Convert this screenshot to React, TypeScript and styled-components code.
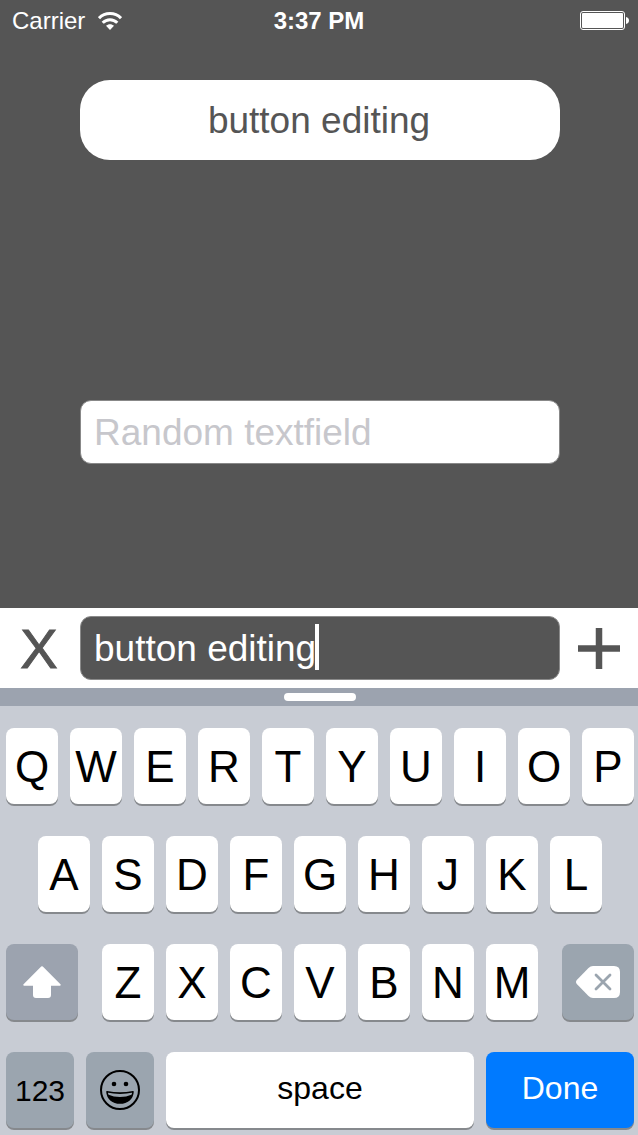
import React from "react";
import styled, { createGlobalStyle } from "styled-components";

const GlobalStyle = createGlobalStyle`
  *, *::before, *::after { box-sizing: border-box; }
  body { margin: 0; background: #555; font-family: "Liberation Sans", Arial, sans-serif; }
  button, input { font-family: inherit; margin: 0; border: 0; padding: 0; }
  svg { display: block; }
`;

const Screen = styled.div`
  display: flex;
  flex-direction: column;
  min-height: 100vh;
  background: #555;
`;

const StatusBar = styled.header`
  display: grid;
  grid-template-columns: 1fr auto 1fr;
  align-items: center;
  height: 40px;
  padding: 0 9px 0 12px;
  color: #fff;
  font-size: 24px;
  line-height: 40px;
`;

const Carrier = styled.div`
  display: flex;
  align-items: center;
  gap: 13px;
  padding-top: 1px;
`;

const Clock = styled.time`
  padding: 1px 3px 0 0;
  font-weight: 700;
`;

const BatterySlot = styled.div`
  display: flex;
  justify-content: flex-end;
`;

const Content = styled.main`
  display: flex;
  flex: 1;
  flex-direction: column;
  gap: 240px;
  padding: 40px 78px 144px 80px;
`;

const PillButton = styled.button`
  height: 80px;
  padding: 2px 2px 0 0;
  border-radius: 30px;
  background: #fff;
  color: #555;
  font-size: 37px;
  line-height: 78px;
`;

const TextField = styled.input<{ $dark?: boolean }>`
  display: block;
  width: 100%;
  height: 64px;
  padding: 2px 13px 0;
  border: 1px solid ${(p) => (p.$dark ? "#8a8a8a" : "#888")};
  border-radius: 11px;
  background: ${(p) => (p.$dark ? "#555" : "#fff")};
  color: ${(p) => (p.$dark ? "#fff" : "#555")};
  font-size: 37px;
  outline: none;
  &::placeholder { color: #c7c7cc; opacity: 1; }
`;

const AccessoryBar = styled.div`
  display: grid;
  grid-template-columns: 80px 1fr 78px;
  align-items: center;
  height: 80px;
  background: #fff;
`;

const BarButton = styled.button`
  display: flex;
  align-items: center;
  justify-content: center;
  height: 80px;
  padding: 2px 2px 0 0;
  background: none;
  color: #555;
  font-size: 56px;
  line-height: 78px;
  -webkit-text-stroke: 1px #555;
`;

const AddButton = styled(BarButton)`
  padding: 2px 0 0;
`;

const EditField = styled.div`
  position: relative;
`;

const Caret = styled.span`
  position: absolute;
  top: 8px;
  left: 235px;
  width: 4px;
  height: 46px;
  background: #fff;
`;

const Grabber = styled.div`
  display: flex;
  justify-content: center;
  height: 18px;
  padding: 5px 0 5px 2px;
  background: #9ca3af;
  &::before {
    content: "";
    width: 72px;
    height: 8px;
    border-radius: 4px;
    background: #fff;
  }
`;

const Keyboard = styled.section`
  display: flex;
  flex-direction: column;
  gap: 32px;
  padding: 22px 4px 7px 6px;
  background: #c8ccd4;
`;

const KeyRow = styled.div<{ $inset?: number; $gap?: number }>`
  display: flex;
  gap: ${(p) => p.$gap ?? 12}px;
  padding: 0 ${(p) => p.$inset ?? 0}px;
`;

const tones = {
  light: { face: "#fff", ink: "#000" },
  shift: { face: "#9ca3af", ink: "#000" },
  shade: { face: "#9ba5af", ink: "#000" },
  action: { face: "#007aff", ink: "#fff" },
};

const Key = styled.button<{ $tone?: keyof typeof tones; $width?: number }>`
  display: flex;
  flex: ${(p) => (p.$width ? `0 0 ${p.$width}px` : "1 1 0")};
  min-width: 0;
  align-items: center;
  justify-content: center;
  height: 76px;
  border-radius: 8px;
  background: ${(p) => tones[p.$tone ?? "light"].face};
  color: ${(p) => tones[p.$tone ?? "light"].ink};
  box-shadow: 0 2px 0 #86898d;
  font-size: 44px;
  line-height: 76px;
`;

const LetterKey = styled(Key)`
  padding-top: 2px;
  line-height: 74px;
`;

const WordKey = styled(Key)`
  padding-bottom: 4px;
  font-size: 32px;
  line-height: 72px;
`;

const NumberKey = styled(Key)`
  padding-top: 2px;
  font-size: 30px;
  line-height: 74px;
`;

const WifiIcon = () => (
  <svg width="24" height="18" viewBox="0 0 24 18" fill="none" stroke="#fff" strokeWidth="3" aria-hidden="true">
    <path d="M1 6.2C7 0 17 0 23 6.2" />
    <path d="M4.700 10.800C8.800 6.600 15.200 6.600 19.300 10.800" />
    <path d="M8 13.800C10.200 11.700 13.800 11.700 16 13.800L12 18Z" fill="#fff" stroke="none" />
  </svg>
);

const BatteryIcon = () => (
  <svg width="49" height="19" viewBox="0 0 49 19" aria-label="Battery full" role="img">
    <rect x=".5" y=".5" width="44" height="18" rx="2.5" fill="none" stroke="#fff" />
    <rect x="2" y="2" width="41" height="15" rx="1" fill="#fff" />
    <path d="M46 6C50 6.500 50 12.500 46 13Z" fill="#fff" />
  </svg>
);

const PlusIcon = () => (
  <svg width="42" height="42" viewBox="0 0 42 42" aria-hidden="true">
    <path d="M0 20.500H42M21 0V41" stroke="#555" strokeWidth="6.500" />
  </svg>
);

const ShiftIcon = () => (
  <svg width="38" height="32" viewBox="0 0 38 32" fill="#fff" aria-hidden="true">
    <path d="M18.200.4Q19 0 19.800.4L37.700 18.500Q38 19.600 37 19.700H28V29Q28 32 25 32H13Q10 32 10 29V19.700H1Q0 19.600.3 18.500Z" />
  </svg>
);

const DeleteIcon = () => (
  <svg width="44" height="32" viewBox="0 0 44 32" aria-hidden="true">
    <path d="M17 0H38Q44 0 44 6V26Q44 32 38 32H17Q14.500 32 12.500 30L.8 18Q-.8 16 .8 14L12.500 2Q14.500 0 17 0Z" fill="#fff" />
    <path d="M20 9L34 23M34 9L20 23" stroke="#9ba5af" strokeWidth="2.800" strokeLinecap="round" />
  </svg>
);

const SmileIcon = () => (
  <svg width="40" height="40" viewBox="0 0 40 40" aria-hidden="true">
    <circle cx="20" cy="20" r="19" fill="none" stroke="#000" strokeWidth="2" />
    <circle cx="14" cy="14" r="2.300" />
    <circle cx="26" cy="14" r="2.300" />
    <path d="M7 21.700Q20 24.500 33 21.700C32.500 29 27 33 20 33S7.500 29 7 21.700Z" fill="none" stroke="#000" strokeWidth="1.600" strokeLinejoin="round" />
    <path d="M7.800 24.500Q20 29.500 32.200 24.500C31 30.500 26 33 20 33S9 30.500 7.800 24.500Z" />
  </svg>
);

const letters = (row: string) =>
  row.split("").map((c) => <LetterKey key={c} type="button">{c}</LetterKey>);

const LetterGroup = styled.div`
  display: flex;
  flex: 1;
  gap: 12px;
`;

export default function App() {
  return (
    <Screen>
      <GlobalStyle />
      <StatusBar>
        <Carrier>Carrier<WifiIcon /></Carrier>
        <Clock>3:37 PM</Clock>
        <BatterySlot><BatteryIcon /></BatterySlot>
      </StatusBar>
      <Content>
        <PillButton type="button">button editing</PillButton>
        <TextField aria-label="Random textfield" placeholder="Random textfield" />
      </Content>
      <AccessoryBar>
        <BarButton type="button" aria-label="Cancel editing">X</BarButton>
        <EditField>
          <TextField $dark aria-label="Button title" defaultValue="button editing" />
          <Caret />
        </EditField>
        <AddButton type="button" aria-label="Add"><PlusIcon /></AddButton>
      </AccessoryBar>
      <Grabber />
      <Keyboard aria-label="Keyboard">
        <KeyRow>{letters("QWERTYUIOP")}</KeyRow>
        <KeyRow $inset={32}>{letters("ASDFGHJKL")}</KeyRow>
        <KeyRow $gap={24}>
          <Key type="button" $tone="shift" $width={72} aria-label="Shift"><ShiftIcon /></Key>
          <LetterGroup>{letters("ZXCVBNM")}</LetterGroup>
          <Key type="button" $tone="shade" $width={72} aria-label="Delete"><DeleteIcon /></Key>
        </KeyRow>
        <KeyRow>
          <NumberKey type="button" $tone="shade" $width={68}>123</NumberKey>
          <Key type="button" $tone="shade" $width={68} aria-label="Emoji"><SmileIcon /></Key>
          <WordKey type="button">space</WordKey>
          <WordKey type="button" $tone="action" $width={148}>Done</WordKey>
        </KeyRow>
      </Keyboard>
    </Screen>
  );
}
